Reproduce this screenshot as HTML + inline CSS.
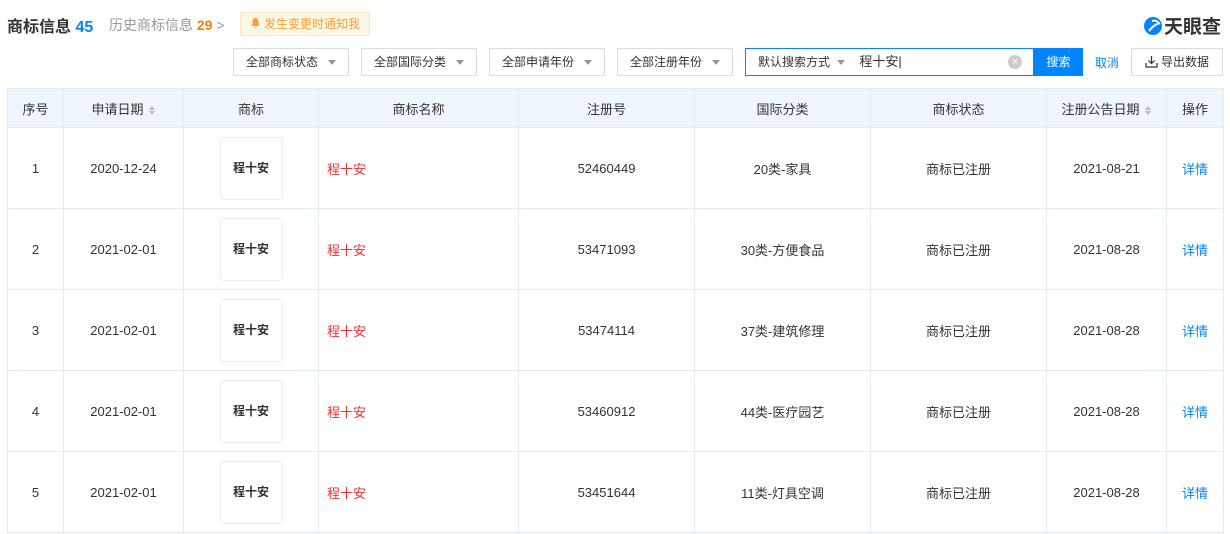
<!DOCTYPE html>
<html><head><meta charset="utf-8"><style>
*{margin:0;padding:0;box-sizing:border-box}
body{width:1230px;height:534px;background:#fff;font-family:"Liberation Sans","Noto Sans CJK SC",sans-serif;color:#333;font-size:13px;position:relative;overflow:hidden}
.abs{position:absolute}
.sel{position:absolute;top:48px;height:28px;border:1px solid #dcdcdc;border-radius:2px;font-size:12px;color:#333;line-height:26px;padding-left:12px}
.sel i{position:absolute;right:12px;top:11px;border-left:4px solid transparent;border-right:4px solid transparent;border-top:5px solid #999}
table{position:absolute;left:7px;top:88px;border-collapse:collapse;width:1216px;table-layout:fixed}
td,th{border:1px solid #e4ecf3;text-align:center;font-weight:normal;font-size:13px;color:#333;vertical-align:middle;padding:0}
th{background:#eef5fc;height:39px}
td{height:81px}
.logo{width:63px;height:63px;margin:0 auto;border:1px solid #eee;border-radius:4px;font-size:12px;font-weight:bold;line-height:61px;color:#333}
.red{color:#f23030;text-align:left;padding-left:8px}
.lnk{color:#0084ff}
.sort{display:inline-block;vertical-align:middle;margin-left:5px;width:7px}
.sort b{display:block;width:0;height:0;border-left:3px solid transparent;border-right:3px solid transparent}
.sort b.u{border-bottom:4px solid #bbb;margin-bottom:1px}
.sort b.d{border-top:4px solid #bbb}
</style></head><body>
<div class="abs" style="left:7px;top:13px;font-size:16px;font-weight:bold;color:#333">商标信息 <span style="color:#0084ff">45</span></div>
<div class="abs" style="left:109px;top:15px;font-size:14px;color:#999">历史商标信息 <span style="color:#ff7a00;font-weight:bold">29</span> &gt;</div>
<div class="abs" style="left:240px;top:12px;width:130px;height:24px;background:#fff7e6;border:1px solid #ffe3b3;border-radius:2px;color:#ff9c33;font-size:12px;line-height:22px;padding-left:9px"><svg width="11" height="12" viewBox="0 0 11 12" style="vertical-align:-1px"><path d="M5.5 1C3.5 1 2.5 2.6 2.5 4.5V7.5L1 9H10L8.5 7.5V4.5C8.5 2.6 7.5 1 5.5 1Z M4 10Q5.5 12 7 10Z" fill="#ff9c33"/></svg><span style="margin-left:3px">发生变更时通知我</span></div>
<div class="abs" style="left:1143px;top:12px;font-size:19px;font-weight:bold;color:#333"><svg width="20" height="20" viewBox="0 0 20 20" style="vertical-align:-3px;margin-right:1px"><circle cx="10" cy="10" r="9" fill="#0084ff"/><path d="M6 15C9 11 13 8 17 7M9 5C12 4 15 5 16 8" stroke="#fff" stroke-width="2" fill="none"/></svg>天眼查</div>
<div class="sel" style="left:233px;width:116px">全部商标状态<i></i></div>
<div class="sel" style="left:361px;width:116px">全部国际分类<i></i></div>
<div class="sel" style="left:489px;width:116px">全部申请年份<i></i></div>
<div class="sel" style="left:617px;width:116px">全部注册年份<i></i></div>
<div class="abs" style="left:745px;top:48px;width:289px;height:28px;border:1px solid #0084ff;font-size:12px;line-height:26px;padding-left:12px">默认搜索方式 <span style="display:inline-block;border-left:4px solid transparent;border-right:4px solid transparent;border-top:5px solid #999;vertical-align:middle;margin-left:4px"></span><span style="margin-left:14px;font-size:13px">程十安|</span>
<span style="position:absolute;left:262px;top:6px;width:14px;height:14px;border-radius:50%;background:#ccc;color:#fff;font-size:11px;line-height:14px;text-align:center">×</span></div>
<div class="abs" style="left:1034px;top:48px;width:49px;height:28px;background:#0084ff;color:#fff;font-size:12px;line-height:28px;text-align:center">搜索</div>
<div class="abs" style="left:1095px;top:54px;color:#0084ff;font-size:12px">取消</div>
<div class="abs" style="left:1131px;top:48px;width:92px;height:28px;border:1px solid #dcdcdc;border-radius:2px;font-size:12px;line-height:26px;text-align:center"><svg width="13" height="13" viewBox="0 0 13 13" style="vertical-align:-2px;margin-right:3px"><path d="M6.5 1V8M3.5 5.5L6.5 8.5L9.5 5.5M1 8V12H12V8" stroke="#333" stroke-width="1.2" fill="none"/></svg>导出数据</div>
<table>
<colgroup><col style="width:56px"><col style="width:120px"><col style="width:135px"><col style="width:200px"><col style="width:176px"><col style="width:176px"><col style="width:176px"><col style="width:120px"><col style="width:57px"></colgroup>
<tr><th>序号</th><th>申请日期<span class="sort"><b class="u"></b><b class="d"></b></span></th><th>商标</th><th>商标名称</th><th>注册号</th><th>国际分类</th><th>商标状态</th><th>注册公告日期<span class="sort"><b class="u"></b><b class="d"></b></span></th><th>操作</th></tr>
<tr><td>1</td><td>2020-12-24</td><td><div class="logo">程十安</div></td><td class="red">程十安</td><td>52460449</td><td>20类-家具</td><td>商标已注册</td><td>2021-08-21</td><td class="lnk">详情</td></tr>
<tr><td>2</td><td>2021-02-01</td><td><div class="logo">程十安</div></td><td class="red">程十安</td><td>53471093</td><td>30类-方便食品</td><td>商标已注册</td><td>2021-08-28</td><td class="lnk">详情</td></tr>
<tr><td>3</td><td>2021-02-01</td><td><div class="logo">程十安</div></td><td class="red">程十安</td><td>53474114</td><td>37类-建筑修理</td><td>商标已注册</td><td>2021-08-28</td><td class="lnk">详情</td></tr>
<tr><td>4</td><td>2021-02-01</td><td><div class="logo">程十安</div></td><td class="red">程十安</td><td>53460912</td><td>44类-医疗园艺</td><td>商标已注册</td><td>2021-08-28</td><td class="lnk">详情</td></tr>
<tr><td>5</td><td>2021-02-01</td><td><div class="logo">程十安</div></td><td class="red">程十安</td><td>53451644</td><td>11类-灯具空调</td><td>商标已注册</td><td>2021-08-28</td><td class="lnk">详情</td></tr>
</table>
</body></html>
